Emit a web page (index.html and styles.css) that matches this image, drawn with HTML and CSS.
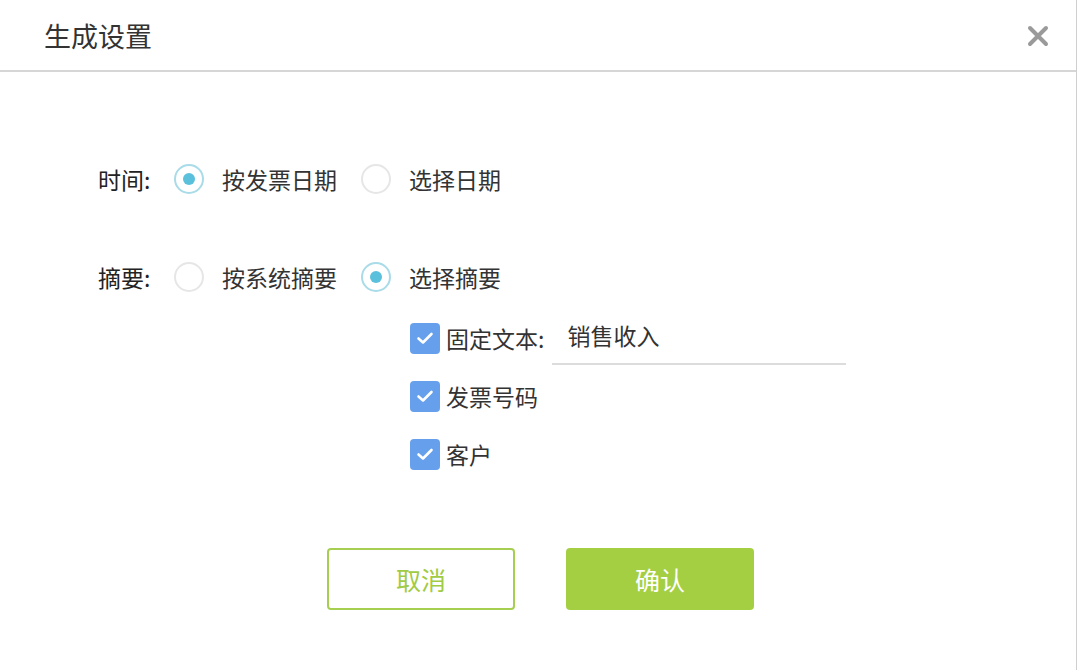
FILE: index.html
```html
<!DOCTYPE html>
<html lang="zh-CN">
  <head>
    <meta charset="UTF-8" />
    <meta name="viewport" content="width=device-width, initial-scale=1.0" />
    <title>生成设置</title>
    <link rel="stylesheet" href="styles.css">
  </head>
  <body>
    <div class="dialog">
      <div class="dialog-header">
        <h1 class="dialog-title">生成设置</h1>
        <span class="close-btn">
          <svg width="22" height="22" viewBox="0 0 22 22">
            <path d="M3 3 L19 19 M19 3 L3 19" stroke="#9a9a9a" stroke-width="4" stroke-linecap="round" />
          </svg>
        </span>
      </div>

      <div class="dialog-body">
        <div class="form-row">
          <span class="row-label">时间:</span>
          <label class="radio checked"><span class="radio-dot"></span>按发票日期</label>
          <label class="radio"><span class="radio-dot"></span>选择日期</label>
        </div>

        <div class="form-row row-summary">
          <span class="row-label">摘要:</span>
          <label class="radio"><span class="radio-dot"></span>按系统摘要</label>
          <label class="radio checked"><span class="radio-dot"></span>选择摘要</label>
        </div>

        <div class="check-list">
          <div class="check-row">
            <span class="checkbox">
              <svg width="18" height="14" viewBox="0 0 18 14">
                <path d="M2.5 7.5 L7 11.5 L15.5 3" fill="none" stroke="#fff" stroke-width="2.6" stroke-linecap="round" stroke-linejoin="round" />
              </svg>
            </span>
            <span class="check-text">固定文本:</span>
            <input type="text" class="text-input" value="销售收入" />
          </div>
          <div class="check-row">
            <span class="checkbox">
              <svg width="18" height="14" viewBox="0 0 18 14">
                <path d="M2.5 7.5 L7 11.5 L15.5 3" fill="none" stroke="#fff" stroke-width="2.6" stroke-linecap="round" stroke-linejoin="round" />
              </svg>
            </span>
            <span class="check-text">发票号码</span>
          </div>
          <div class="check-row">
            <span class="checkbox">
              <svg width="18" height="14" viewBox="0 0 18 14">
                <path d="M2.5 7.5 L7 11.5 L15.5 3" fill="none" stroke="#fff" stroke-width="2.6" stroke-linecap="round" stroke-linejoin="round" />
              </svg>
            </span>
            <span class="check-text">客户</span>
          </div>
        </div>

        <div class="dialog-footer">
          <button class="btn btn-cancel">取消</button>
          <button class="btn btn-confirm">确认</button>
        </div>
      </div>
    </div>
  </body>
</html>
```

FILE: styles.css
```css
body {
  margin: 0;
  padding: 0;
  font-family: "Noto Sans CJK SC", "Noto Sans", sans-serif;
  color: #333;
  background: #fff;
}
.dialog {
  width: 1077px;
  height: 670px;
  border-right: 1px solid #cfcfcf;
  box-sizing: border-box;
}
.dialog-header {
  height: 70px;
  display: flex;
  align-items: center;
  justify-content: space-between;
  padding: 0 27px 0 44px;
  border-bottom: 2px solid #d6d6d6;
}
.dialog-title {
  margin: 0;
  font-size: 27px;
  font-weight: normal;
  color: #333;
}
.close-btn {
  display: flex;
  margin-top: 1px;
}
.dialog-body {
  padding-top: 87px;
}
.form-row {
  display: flex;
  align-items: center;
  height: 40px;
  padding-left: 98px;
  font-size: 23px;
}
.row-summary {
  margin-top: 58px;
}
.row-label {
  width: 76px;
  color: #222;
}
.radio {
  display: flex;
  align-items: center;
  margin-right: 24px;
  color: #333;
}
.radio-dot {
  width: 30px;
  height: 30px;
  box-sizing: border-box;
  border: 2px solid #e6e6e6;
  border-radius: 50%;
  margin-right: 18px;
  display: flex;
  align-items: center;
  justify-content: center;
}
.radio.checked .radio-dot {
  border-color: #a9dbe8;
}
.radio.checked .radio-dot::after {
  content: "";
  width: 12px;
  height: 12px;
  border-radius: 50%;
  background: #5bc0dc;
}
.check-list {
  margin-top: 12px;
  padding-left: 410px;
  display: grid;
  grid-auto-rows: 58px;
}
.check-row {
  display: flex;
  align-items: center;
  font-size: 23px;
}
.checkbox {
  width: 30px;
  height: 31px;
  border-radius: 4px;
  background: #66a0ec;
  display: flex;
  align-items: center;
  justify-content: center;
  margin-right: 6px;
}
.text-input {
  margin-left: 8px;
  width: 294px;
  height: 54px;
  box-sizing: border-box;
  border: none;
  border-bottom: 2px solid #dcdcdc;
  padding: 0 0 4px 15px;
  font-family: inherit;
  font-size: 23px;
  color: #333;
  outline: none;
}
.dialog-footer {
  margin-top: 65px;
  padding-left: 5px;
  display: flex;
  justify-content: center;
  gap: 51px;
}
.btn {
  width: 188px;
  height: 62px;
  border-radius: 4px;
  font-family: inherit;
  font-size: 25px;
  cursor: pointer;
  box-sizing: border-box;
}
.btn-cancel {
  background: #fff;
  border: 2px solid #a6cf52;
  color: #9fcb45;
}
.btn-confirm {
  background: #a4cf42;
  border: none;
  color: #fff;
}
```
